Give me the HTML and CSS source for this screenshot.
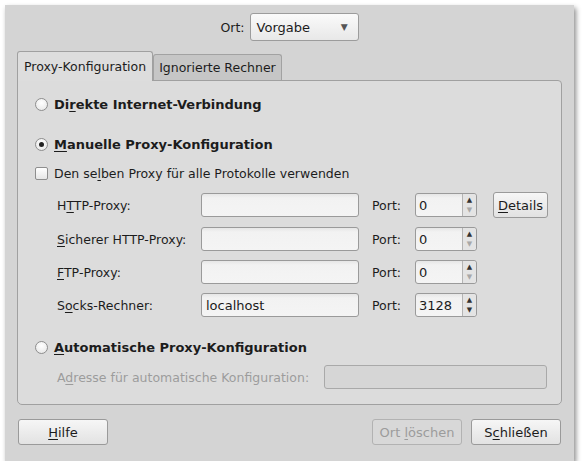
FILE: index.html
```html
<!DOCTYPE html>
<html lang="de">
<head>
    <meta charset="UTF-8">
    <title>Proxy-Einstellungen</title>
    <link rel="stylesheet" href="styles.css">
</head>
<body>
    <div class="window">
        <div class="location">
            <span class="location-label">Ort:</span>
            <div class="combo">
                <span>Vorgabe</span>
                <span class="combo-arrow">&#9660;</span>
            </div>
        </div>

        <div class="notebook">
            <div class="tabs">
                <div class="tab active">Proxy-Konfiguration</div>
                <div class="tab">Ignorierte Rechner</div>
            </div>
            <div class="panel">
                <div class="option first">
                    <span class="radio"></span>
                    <span class="option-title">Di<u>r</u>ekte Internet-Verbindung</span>
                </div>

                <div class="option second">
                    <span class="radio checked"></span>
                    <span class="option-title"><u>M</u>anuelle Proxy-Konfiguration</span>
                </div>

                <div class="option check-row">
                    <span class="checkbox"></span>
                    <span>Den se<u>l</u>ben Proxy für alle Protokolle verwenden</span>
                </div>

                <div class="proxy-grid">
                    <span class="proxy-label">H<u>T</u>TP-Proxy:</span>
                    <span class="entry"></span>
                    <span class="port-label">Port:</span>
                    <span class="spin"><span class="spin-value">0</span><span class="spin-arrows"><i class="up">&#9650;</i><i class="down off">&#9660;</i></span></span>
                    <span class="button details"><span><u>D</u>etails</span></span>

                    <span class="proxy-label"><u>S</u>icherer HTTP-Proxy:</span>
                    <span class="entry"></span>
                    <span class="port-label">Port:</span>
                    <span class="spin"><span class="spin-value">0</span><span class="spin-arrows"><i class="up">&#9650;</i><i class="down off">&#9660;</i></span></span>
                    <span></span>

                    <span class="proxy-label"><u>F</u>TP-Proxy:</span>
                    <span class="entry"></span>
                    <span class="port-label">Port:</span>
                    <span class="spin"><span class="spin-value">0</span><span class="spin-arrows"><i class="up">&#9650;</i><i class="down off">&#9660;</i></span></span>
                    <span></span>

                    <span class="proxy-label">S<u>o</u>cks-Rechner:</span>
                    <span class="entry">localhost</span>
                    <span class="port-label">Port:</span>
                    <span class="spin"><span class="spin-value">3128</span><span class="spin-arrows"><i class="up">&#9650;</i><i class="down">&#9660;</i></span></span>
                    <span></span>
                </div>

                <div class="option third">
                    <span class="radio"></span>
                    <span class="option-title"><u>A</u>utomatische Proxy-Konfiguration</span>
                </div>

                <div class="auto-row">
                    <span class="muted">A<u>d</u>resse für automatische Konfiguration:</span>
                    <span class="entry disabled"></span>
                </div>
            </div>
        </div>

        <div class="actions">
            <span class="button wide"><span><u>H</u>ilfe</span></span>
            <span class="spacer"></span>
            <span class="button wide disabled"><span>Ort <u>l</u>öschen</span></span>
            <span class="button wide"><span>S<u>c</u>hließen</span></span>
        </div>
    </div>
</body>
</html>
```

FILE: styles.css
```css
body {
    margin: 0;
    background: #ffffff;
    font-family: "DejaVu Sans", sans-serif;
    font-size: 12.5px;
    color: #1c1c1c;
}
u {
    text-decoration-thickness: 1px;
    text-underline-offset: 2px;
}
.window {
    margin: 5px 0 0 5px;
    width: 569px;
    height: 456px;
    background: #d4d4d4;
    box-shadow: 2px 3px 5px rgba(0,0,0,0.45);
    box-sizing: border-box;
    padding-top: 8px;
}
.location {
    display: flex;
    justify-content: center;
    align-items: center;
    gap: 5px;
    height: 28px;
}
.combo {
    display: flex;
    align-items: center;
    justify-content: space-between;
    box-sizing: border-box;
    width: 109px;
    height: 28px;
    padding: 0 10px 0 6px;
    border: 1px solid #9c9c9c;
    border-radius: 3px;
    background: linear-gradient(#fafafa, #e8e8e8);
    font-size: 13px;
}
.combo-arrow {
    font-size: 9px;
    color: #555;
}
.notebook {
    margin: 9px 0 0 12px;
    width: 545px;
}
.tabs {
    display: flex;
    align-items: flex-end;
    height: 30px;
}
.tab {
    box-sizing: border-box;
    height: 26px;
    padding: 0 5px;
    line-height: 25px;
    background: #c6c6c6;
    border: 1px solid #a2a2a2;
    border-bottom: none;
    border-radius: 3px 3px 0 0;
}
.tab.active {
    height: 30px;
    line-height: 29px;
    background: #dddddd;
    padding: 0 6px;
    position: relative;
    top: 1px;
    border-color: #a0a0a0;
}
.panel {
    box-sizing: border-box;
    height: 325px;
    background: #dcdcdc;
    border: 1px solid #a0a0a0;
    border-radius: 0 4px 5px 5px;
    padding: 11px 14px 0 17px;
}
.option {
    display: flex;
    align-items: center;
    gap: 6px;
    height: 24px;
}
.option-title {
    font-weight: bold;
    font-size: 13px;
}
.second { margin-top: 16px; }
.check-row { margin-top: 5px; }
.third { margin-top: 18px; }
.radio {
    box-sizing: border-box;
    width: 13px;
    height: 13px;
    border-radius: 50%;
    border: 1px solid #8e8e8e;
    background: radial-gradient(circle at 50% 35%, #ffffff, #e4e4e4);
    display: flex;
    align-items: center;
    justify-content: center;
}
.radio.checked::after {
    content: "";
    width: 5px;
    height: 5px;
    border-radius: 50%;
    background: #222;
}
.checkbox {
    box-sizing: border-box;
    width: 13px;
    height: 13px;
    border: 1px solid #8e8e8e;
    border-radius: 2px;
    background: linear-gradient(#ffffff, #e6e6e6);
}
.proxy-grid {
    display: grid;
    grid-template-columns: 144px 158px 56px 62px auto;
    row-gap: 9px;
    align-items: center;
    margin: 7px 0 0 22px;
}
.proxy-grid .port-label {
    padding-left: 13px;
}
.entry {
    box-sizing: border-box;
    display: flex;
    align-items: center;
    height: 24px;
    padding: 0 4px;
    border: 1px solid #9a9a9a;
    border-radius: 3px;
    background: linear-gradient(#e6e6e6 0, #f2f2f2 4px, #f4f4f4);
    font-size: 13px;
}
.entry.disabled {
    flex: 1;
    background: #d6d6d6;
    border-color: #a9a9a9;
}
.spin {
    box-sizing: border-box;
    display: flex;
    height: 24px;
    width: 62px;
    border: 1px solid #9a9a9a;
    border-radius: 3px;
    background: linear-gradient(#e6e6e6 0, #f2f2f2 4px, #f4f4f4);
    font-size: 13px;
}
.spin-value {
    flex: 1;
    display: flex;
    align-items: center;
    padding-left: 3px;
}
.spin-arrows {
    width: 13px;
    border-left: 1px solid #b4b4b4;
    display: flex;
    flex-direction: column;
    align-items: center;
    justify-content: center;
    background: #e4e4e4;
    border-radius: 0 3px 3px 0;
}
.spin-arrows i {
    font-style: normal;
    font-size: 7px;
    line-height: 10px;
    color: #333;
}
.spin-arrows i.off {
    color: #a8a8a8;
}
.button {
    box-sizing: border-box;
    display: inline-flex;
    align-items: center;
    justify-content: center;
    height: 26px;
    border: 1px solid #9a9a9a;
    border-radius: 3px;
    background: linear-gradient(#f6f6f6, #e2e2e2);
    font-size: 13px;
}
.details {
    width: 55px;
    margin-left: 16px;
}
.auto-row {
    display: flex;
    align-items: center;
    gap: 15px;
    margin: 6px 0 0 22px;
}
.muted, .disabled {
    color: #9c9c9c;
}
.actions {
    display: flex;
    align-items: center;
    gap: 9px;
    margin: 14px 0 0 13px;
    width: 543px;
}
.spacer { flex: 1; }
.button.wide { width: 90px; }
.button.disabled {
    background: #d8d8d8;
    border-color: #b2b2b2;
}
```
